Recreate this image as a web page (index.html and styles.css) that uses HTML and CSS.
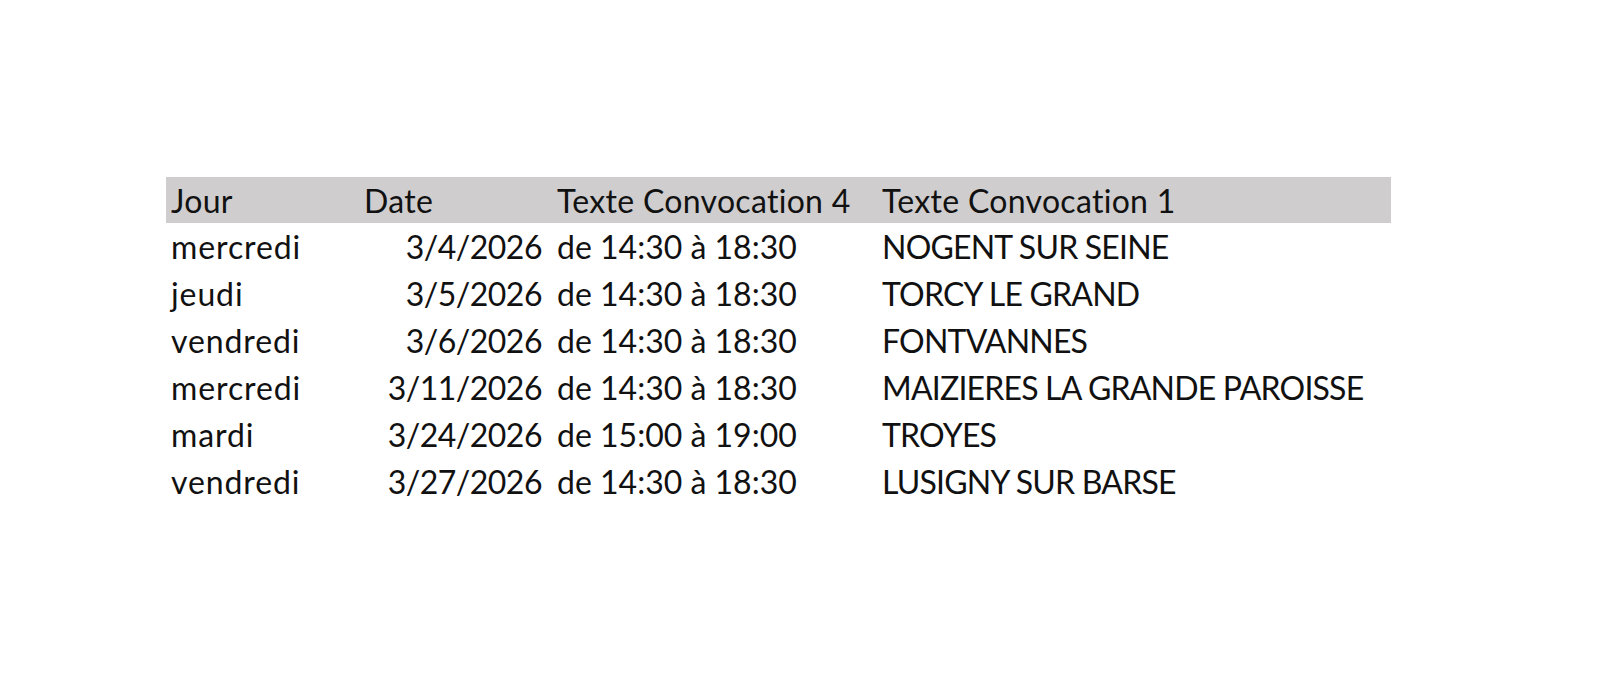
FILE: index.html
```html
<!DOCTYPE html>
<html lang="fr">
<head>
<meta charset="utf-8">
<title>Convocations</title>
<link rel="stylesheet" href="styles.css">
</head>
<body>
<div class="sheet">
  <div class="row head">
    <div class="c c1">Jour</div>
    <div class="c c2">Date</div>
    <div class="c c3">Texte Convocation 4</div>
    <div class="c c4">Texte Convocation 1</div>
  </div>
  <div class="row">
    <div class="c c1">mercredi</div>
    <div class="c c2 num">3/4/2026</div>
    <div class="c c3">de 14:30 à 18:30</div>
    <div class="c c4">NOGENT SUR SEINE</div>
  </div>
  <div class="row">
    <div class="c c1">jeudi</div>
    <div class="c c2 num">3/5/2026</div>
    <div class="c c3">de 14:30 à 18:30</div>
    <div class="c c4">TORCY LE GRAND</div>
  </div>
  <div class="row">
    <div class="c c1">vendredi</div>
    <div class="c c2 num">3/6/2026</div>
    <div class="c c3">de 14:30 à 18:30</div>
    <div class="c c4">FONTVANNES</div>
  </div>
  <div class="row">
    <div class="c c1">mercredi</div>
    <div class="c c2 num">3/11/2026</div>
    <div class="c c3">de 14:30 à 18:30</div>
    <div class="c c4">MAIZIERES LA GRANDE PAROISSE</div>
  </div>
  <div class="row">
    <div class="c c1">mardi</div>
    <div class="c c2 num">3/24/2026</div>
    <div class="c c3">de 15:00 à 19:00</div>
    <div class="c c4">TROYES</div>
  </div>
  <div class="row">
    <div class="c c1">vendredi</div>
    <div class="c c2 num">3/27/2026</div>
    <div class="c c3">de 14:30 à 18:30</div>
    <div class="c c4">LUSIGNY SUR BARSE</div>
  </div>
</div>
</body>
</html>
```
FILE: styles.css
```css
html, body {
  margin: 0;
  padding: 0;
  background: #ffffff;
}
body {
  width: 1610px;
  height: 680px;
  overflow: hidden;
  font-family: Lato, "Open Sans", sans-serif;
  font-size: 32px;
  color: #111111;
  font-variant-ligatures: none;
  font-feature-settings: "liga" 0;
}
.sheet {
  padding: 177px 0 0 166px;
}
.row {
  display: grid;
  grid-template-columns: 193px 192px 326px 514px;
  width: 1225px;
  height: 47px;
  align-items: center;
  white-space: nowrap;
}
.row.head {
  height: 46px;
  background: #cfcdce;
}
.c {
  padding-left: 5px;
  line-height: 47px;
}
.c1 { letter-spacing: 0.9px; }
.c3 { padding-left: 6px; }
.c4 { letter-spacing: -0.8px; }
.head .c { letter-spacing: 0.3px; }
.num {
  text-align: right;
  padding-left: 0;
  padding-right: 9px;
  letter-spacing: -0.5px;
}
```
